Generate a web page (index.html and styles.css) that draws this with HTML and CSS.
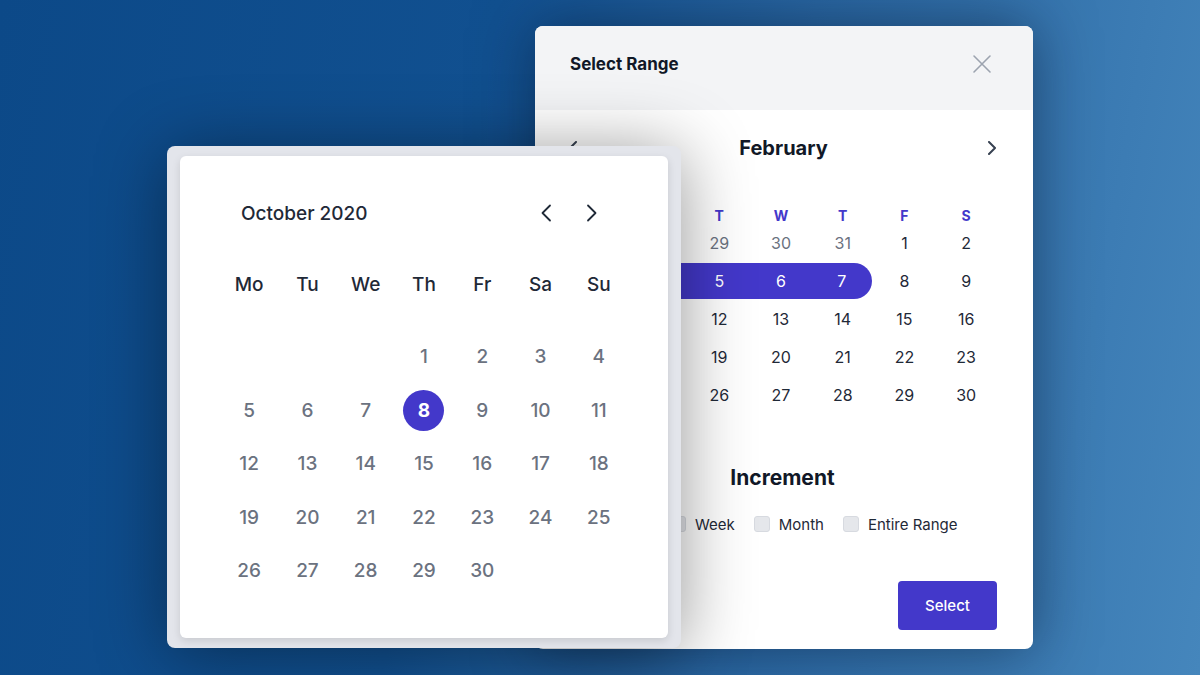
FILE: index.html
```html
<html>

<head>
  <title>Date pickers</title>
  <link rel="stylesheet" href="styles.css">
</head>

<body>
  <div class="stage">

    <!-- range modal -->
    <div class="modal">
      <div class="modal-head">
        <span class="modal-title">Select Range</span>
        <svg class="close" width="20" height="20" viewBox="0 0 20 20">
          <path d="M2 2 L18 18 M18 2 L2 18" stroke="#9ca3af" stroke-width="1.6" stroke-linecap="round" fill="none" />
        </svg>
      </div>
      <div class="modal-body">
        <div class="month-nav">
          <svg width="10" height="14" viewBox="0 0 10 14">
            <path d="M8 1 L2 7 L8 13" stroke="#374151" stroke-width="2" fill="none" stroke-linecap="round" stroke-linejoin="round" />
          </svg>
          <span class="month-name">February</span>
          <svg width="10" height="14" viewBox="0 0 10 14">
            <path d="M2 1 L8 7 L2 13" stroke="#374151" stroke-width="2" fill="none" stroke-linecap="round" stroke-linejoin="round" />
          </svg>
        </div>
        <div class="week-letters">
          <span>S</span><span>M</span><span>T</span><span>W</span><span>T</span><span>F</span><span>S</span>
        </div>
        <div class="range-days">
          <span class="out">27</span><span class="out">28</span><span class="out">29</span><span class="out">30</span><span class="out">31</span><span>1</span><span>2</span>
          <span class="in first">3</span><span class="in">4</span><span class="in">5</span><span class="in">6</span><span class="in last">7</span><span>8</span><span>9</span>
          <span>10</span><span>11</span><span>12</span><span>13</span><span>14</span><span>15</span><span>16</span>
          <span>17</span><span>18</span><span>19</span><span>20</span><span>21</span><span>22</span><span>23</span>
          <span>24</span><span>25</span><span>26</span><span>27</span><span>28</span><span>29</span><span>30</span>
        </div>
        <div class="increment-title">Increment</div>
        <div class="increment">
          <label><span class="box"></span>Day</label>
          <label><span class="box"></span>Week</label>
          <label><span class="box"></span>Month</label>
          <label><span class="box"></span>Entire Range</label>
        </div>
        <div class="actions">
          <button type="button">Select</button>
        </div>
      </div>
    </div>

    <!-- single date picker -->
    <div class="picker">
      <div class="picker-card">
        <div class="picker-head">
          <span class="picker-month">October 2020</span>
          <div class="arrows">
            <svg width="12" height="18" viewBox="0 0 12 18">
              <path d="M10 1.5 L2.5 9 L10 16.5" stroke="#1f2937" stroke-width="1.8" fill="none" stroke-linecap="round" stroke-linejoin="round" />
            </svg>
            <svg width="12" height="18" viewBox="0 0 12 18">
              <path d="M2 1.5 L9.5 9 L2 16.5" stroke="#1f2937" stroke-width="1.8" fill="none" stroke-linecap="round" stroke-linejoin="round" />
            </svg>
          </div>
        </div>
        <div class="day-names">
          <span>Mo</span><span>Tu</span><span>We</span><span>Th</span><span>Fr</span><span>Sa</span><span>Su</span>
        </div>
        <div class="days">
          <span></span><span></span><span></span><span>1</span><span>2</span><span>3</span><span>4</span>
          <span>5</span><span>6</span><span>7</span><span><b class="picked">8</b></span><span>9</span><span>10</span><span>11</span>
          <span>12</span><span>13</span><span>14</span><span>15</span><span>16</span><span>17</span><span>18</span>
          <span>19</span><span>20</span><span>21</span><span>22</span><span>23</span><span>24</span><span>25</span>
          <span>26</span><span>27</span><span>28</span><span>29</span><span>30</span>
        </div>
      </div>
    </div>

  </div>
</body>

</html>
```

FILE: styles.css
```css
html, body {
  margin: 0;
  height: 100%;
}

body {
  font-family: Inter, "Liberation Sans", sans-serif;
  background: linear-gradient(100deg, #0c4988 0%, #115090 38%, #2a68a4 62%, #4586bc 100%);
  overflow: hidden;
}

.stage {
  position: relative;
  width: 1200px;
  height: 675px;
}

/* ---------- range modal ---------- */

.modal {
  position: absolute;
  left: 535px;
  top: 26px;
  width: 498px;
  border-radius: 8px;
  background: #fff;
  overflow: hidden;
  box-shadow: 0 0 60px rgba(0, 15, 40, 0.5);
}

.modal-head {
  height: 76px;
  background: #f3f4f6;
  display: flex;
  align-items: center;
  justify-content: space-between;
  padding: 0 41px 8px 35px;
}

.modal-title {
  font-size: 17px;
  font-weight: 700;
  color: #111827;
}

.modal-body {
  padding: 26px 36px 19px 30px;
}

.month-nav {
  height: 24px;
  display: flex;
  align-items: center;
  justify-content: space-between;
  padding: 0 0 0 3px;
}

.month-name {
  font-size: 20px;
  font-weight: 700;
  color: #111827;
  margin-left: 2px;
}

.week-letters,
.range-days {
  display: grid;
  grid-template-columns: repeat(7, 1fr);
  text-align: center;
}

.week-letters {
  margin-top: 48px;
  height: 16px;
  line-height: 16px;
  font-size: 14px;
  font-weight: 700;
  color: #4338ca;
}

.range-days span {
  height: 36px;
  line-height: 36px;
  margin: 1px 0;
  font-size: 16px;
  color: #1f2937;
}

.range-days .out {
  color: #6b7280;
}

.range-days .in {
  background: #4338ca;
  color: #fff;
}

.range-days .first {
  border-radius: 18px 0 0 18px;
}

.range-days .last {
  border-radius: 0 18px 18px 0;
  margin-right: 2px;
}

.increment-title {
  margin-top: 50px;
  height: 28px;
  line-height: 28px;
  text-align: center;
  font-size: 21px;
  font-weight: 700;
  color: #111827;
  padding-left: 3px;
}

.increment {
  margin-top: 22px;
  height: 20px;
  display: flex;
  justify-content: center;
  gap: 19px;
  padding-right: 6px;
}

.increment label {
  display: flex;
  align-items: center;
  gap: 9px;
  font-size: 15px;
  color: #1f2937;
}

.box {
  width: 14px;
  height: 14px;
  border: 1px solid #d7dae0;
  border-radius: 3px;
  background: #e5e7eb;
}

.actions {
  margin-top: 47px;
  display: flex;
  justify-content: flex-end;
}

button {
  width: 99px;
  height: 49px;
  border: 0;
  border-radius: 4px;
  background: #4338ca;
  color: #fff;
  font-family: inherit;
  font-size: 15px;
  font-weight: 500;
  cursor: pointer;
}

/* ---------- single date picker ---------- */

.picker {
  position: absolute;
  left: 167px;
  top: 146px;
  padding: 10px 13px;
  border-radius: 8px;
  background: #e3e5eb;
  box-shadow: 0 6px 70px rgba(0, 0, 0, 0.42);
}

.picker-card {
  width: 488px;
  height: 482px;
  box-sizing: border-box;
  padding: 37px 40px 0;
  border-radius: 6px;
  background: #fff;
  box-shadow: 0 3px 8px rgba(0, 0, 0, 0.12);
}

.picker-head {
  height: 40px;
  display: flex;
  align-items: center;
  justify-content: space-between;
  margin: 0 30px 0 21px;
}

.picker-month {
  font-size: 19px;
  font-weight: 500;
  color: #1f2937;
}

.arrows {
  display: flex;
  gap: 34px;
}

.day-names,
.days {
  display: grid;
  grid-template-columns: repeat(7, 1fr);
  text-align: center;
  font-size: 19px;
  font-weight: 500;
}

.day-names {
  margin-top: 32px;
  height: 40px;
  line-height: 40px;
  color: #1f2937;
}

.days {
  margin-top: 25px;
  grid-auto-rows: 53.5px;
  color: #6b7280;
}

.days span {
  display: flex;
  align-items: center;
  justify-content: center;
}

.picked {
  width: 41px;
  height: 41px;
  border-radius: 50%;
  background: #4338ca;
  color: #fff;
  font-weight: 700;
  display: flex;
  align-items: center;
  justify-content: center;
}
```
